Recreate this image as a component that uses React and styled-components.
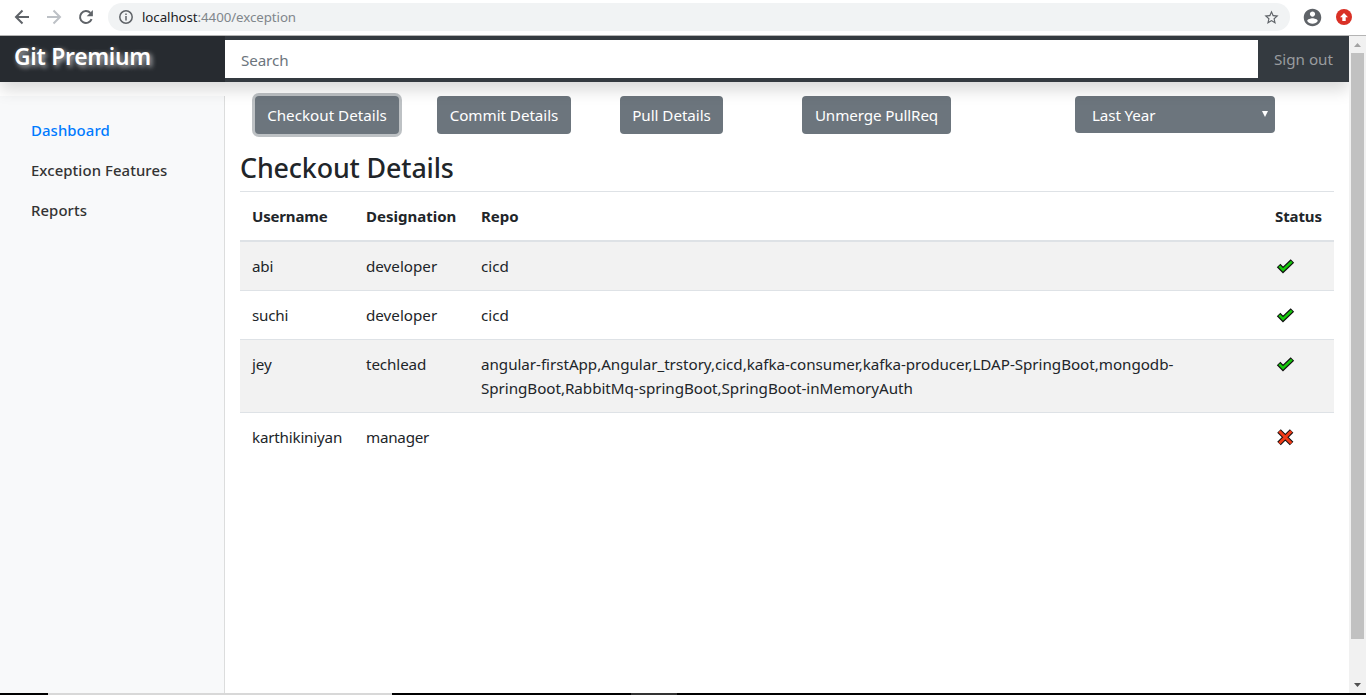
import React from "react";
import styled, { createGlobalStyle } from "styled-components";

const Global = createGlobalStyle`
  *, *::before, *::after { box-sizing: border-box; }
  html, body { margin: 0; padding: 0; overflow: hidden; }
  body { background: #fff; color: #212529; font: 400 15.2px/24px "Noto Sans", "Open Sans", sans-serif; }
`;
const Text = styled.span`
  white-space: nowrap;
  letter-spacing: ${(p) => p.$ls || 0}px;
`;
const Window = styled.div`
  width: 1366px; height: 695px; display: flex; flex-direction: column; overflow: hidden;
`;
const Toolbar = styled.div`
  height: 36px; flex: none; display: flex; align-items: center; padding: 0 2px 1px 11px;
  border-bottom: 1px solid #b4b4b4; background: #fff;
`;
const IconSlot = styled.span`
  width: ${(p) => p.$w}px; display: flex; justify-content: center; align-items: center; flex: none;
  svg { display: block; }
`;
const Address = styled.div`
  flex: 1; height: 28px; border-radius: 14px; background: #f1f3f4; display: flex; align-items: center;
  padding: 0 10px 0 9px; margin: 0 10px 0 11px; color: #80868b; font-size: 13.3px; line-height: 28px;
`;
const Host = styled(Text)`color: #202124;`;
const Path = styled(Text)`flex: 1;`;
const Viewport = styled.div`height: 657px; flex: none; display: flex; overflow: hidden;`;
const Page = styled.div`width: 1349px; flex: none; display: flex; flex-direction: column; overflow: hidden; height: 657px;`;
const Navbar = styled.header`
  height: 46px; flex: none; display: flex; align-items: center; background: #343a40;
  box-shadow: 0 8px 16px rgba(0,0,0,.15); position: relative; z-index: 2;
`;
const Brand = styled.div`
  width: 225px; height: 46px; background: #272b30; padding: 4px 0 0 14px; line-height: 34px;
  color: #fff; font-size: 22.8px; font-weight: 600; text-shadow: 2px 2px 5px rgba(255,255,255,.75);
`;
const Search = styled.div`width: 1033px; height: 38px; background: #fff; color: #6c757d; padding: 0 16px; line-height: 41px;`;
const SignOut = styled.div`flex: 1; padding-left: 16px; color: #999c9f; line-height: 46px; white-space: nowrap;`;
const Body = styled.div`flex: 1; display: flex; padding-top: 14px;`;
const Sidebar = styled.nav`
  width: 225px; flex: none; background: #f8f9fa; border-right: 1px solid #dcdddd; padding: 14px 0 0 31px;
`;
const NavItem = styled.div`
  height: 40px; line-height: 40px; font-size: 14.9px; font-weight: 500; color: ${(p) => (p.$active ? "#007bff" : "#333")};
`;
const Main = styled.main`flex: 1; padding: 0 15px;`;
const Actions = styled.div`display: flex; padding-left: 15px;`;
const Button = styled.div`
  width: ${(p) => p.$w}px; height: 38px; margin-right: ${(p) => p.$gap}px; border-radius: 4px; background: #6c757d;
  color: #fff; display: flex; justify-content: center; line-height: 39px;
  box-shadow: ${(p) => (p.$focus ? "0 0 0 3px rgba(108,117,125,.45)" : "none")};
`;
const Select = styled.div`
  width: 200px; height: 37px; border-radius: 4px; background: #6c757d; color: #fff; line-height: 39px;
  display: flex; justify-content: space-between; padding: 0 7px 0 17px;
  svg { margin-top: 15px; }
`;
const Title = styled.h3`margin: 17px 0 6px; height: 34px; line-height: 34px; font-size: 26.8px; font-weight: 500;`;
const Table = styled.table`
  width: 1094px; table-layout: fixed; border-spacing: 0; border-collapse: separate;
`;
const Th = styled.th`
  width: ${(p) => p.$w}; height: 51px; padding: 0 12px 1px; border-top: 1px solid #dee2e6; border-bottom: 2px solid #dee2e6;
  text-align: left; font-weight: 700; font-size: 15px;
`;
const Row = styled.tr`background: ${(p) => (p.$striped ? "#f2f2f2" : "#fff")};`;
const Td = styled.td`
  padding: 12px 12px; border-top: ${(p) => (p.$first ? 0 : 1)}px solid #dee2e6; vertical-align: top;
  height: ${(p) => (p.$first ? 48 : 49)}px;
`;
const Line = styled(Text)`display: block;`;
const StatusCell = styled(Td)`svg { display: block; margin: 3px 0 0 1px; }`;
const Scrollbar = styled.div`
  width: 17px; background: #f1f1f1; display: flex; flex-direction: column; align-items: center; flex: none;
`;
const ScrollArrow = styled.div`height: 17px; display: flex; align-items: center;`;
const Thumb = styled.div`width: 13px; height: 586px; background: #c1c1c1; margin-bottom: 37px;`;
const Taskbar = styled.div`height: 2px; display: flex; background: #000;`;
const TaskItem = styled.div`width: ${(p) => p.$w}px; background: ${(p) => p.$c};`;

const Tick = () => (
  <svg width="20" height="18" viewBox="0 0 20 18">
    <path d="M2.6 8.6 7 13 16.4 4" fill="none" stroke="#111" strokeWidth="5" />
    <path d="M3.2 9.2 7 13 15.8 4.6" fill="none" stroke="#16c60c" strokeWidth="2.6" />
  </svg>
);
const Cross = () => (
  <svg width="19" height="19" viewBox="0 0 19 19">
    <path d="M3 3 15.6 15.6M15.6 3 3 15.6" stroke="#111" strokeWidth="5" />
    <path d="M3.3 3.3 15.3 15.3M15.3 3.3 3.3 15.3" stroke="#f03a17" strokeWidth="3" />
  </svg>
);

const rows = [
  { user: "abi", role: "developer", repo: ["cicd"], ok: true, ls: -0.15 },
  { user: "suchi", role: "developer", repo: ["cicd"], ok: true, ls: -0.2 },
  {
    user: "jey", role: "techlead", ok: true, ls: -0.1, roleLs: -0.1,
    repo: [
      "angular-firstApp,Angular_trstory,cicd,kafka-consumer,kafka-producer,LDAP-SpringBoot,mongodb-",
      "SpringBoot,RabbitMq-springBoot,SpringBoot-inMemoryAuth",
    ],
  },
  { user: "karthikiniyan", role: "manager", repo: [], ok: false, ls: -0.2, roleLs: -0.25 },
];

export default function App() {
  return (
    <Window>
      <Global />
      <Toolbar>
        <IconSlot $w={22}><svg width="16" height="16" viewBox="0 0 16 16" fill="none" stroke="#5f6368" strokeWidth="2"><path d="M15 8H2M8.5 1.5 2 8l6.5 6.5" /></svg></IconSlot>
        <IconSlot $w={42}><svg width="16" height="16" viewBox="0 0 16 16" fill="none" stroke="#bdc1c6" strokeWidth="2"><path d="M1 8h13M7.5 1.5 14 8l-6.5 6.5" /></svg></IconSlot>
        <IconSlot $w={22}><svg width="16" height="16" viewBox="0 0 16 16"><path d="M13.6 10.2A6 6 0 1 1 12.4 3.9" fill="none" stroke="#5f6368" strokeWidth="2" /><path d="M14.9 1v6.2H8.7z" fill="#5f6368" /></svg></IconSlot>
        <Address>
          <IconSlot $w={18}><svg width="14" height="14" viewBox="0 0 14 14"><circle cx="7" cy="7" r="6.2" fill="none" stroke="#5f6368" strokeWidth="1.5" /><path d="M7 6v4.5M7 3.5V5" stroke="#5f6368" strokeWidth="1.5" /></svg></IconSlot>
          <IconSlot $w={7} />
          <Host $ls={-0.07}>localhost</Host><Path $ls={-0.07}>:4400/exception</Path>
          <svg width="17" height="17" viewBox="0 0 24 24" fill="#5f6368"><path d="M22 9.24l-7.19-.62L12 2 9.19 8.63 2 9.24l5.46 4.73L5.82 21 12 17.27 18.18 21l-1.63-7.03L22 9.24zM12 15.4l-3.76 2.27 1-4.28-3.32-2.88 4.38-.38L12 6.1l1.71 4.04 4.38.38-3.32 2.88 1 4.28L12 15.4z" /></svg>
        </Address>
        <IconSlot $w={24}><svg width="21" height="21" viewBox="0 0 24 24" fill="#5f6368"><path d="M12 2C6.48 2 2 6.48 2 12s4.48 10 10 10 10-4.48 10-10S17.52 2 12 2zm0 3c1.66 0 3 1.34 3 3s-1.34 3-3 3-3-1.34-3-3 1.34-3 3-3zm0 14.2c-2.5 0-4.71-1.28-6-3.22.03-1.99 4-3.08 6-3.08 1.99 0 5.97 1.09 6 3.08-1.29 1.94-3.5 3.22-6 3.22z" /></svg></IconSlot>
        <IconSlot $w={40}><svg width="16" height="16" viewBox="0 0 16 16"><circle cx="8" cy="8" r="8" fill="#d93025" /><path d="M8 4 4 8.3h2.3V12h3.4V8.3H12z" fill="#fff" /></svg></IconSlot>
      </Toolbar>
      <Viewport>
        <Page>
          <Navbar>
            <Brand><Text $ls={-0.25}>Git Premium</Text></Brand>
            <Search><Text $ls={-0.1}>Search</Text></Search>
            <SignOut><Text>Sign out</Text></SignOut>
          </Navbar>
          <Body>
            <Sidebar>
              <NavItem $active><Text $ls={0.08}>Dashboard</Text></NavItem>
              <NavItem><Text $ls={0.08}>Exception Features</Text></NavItem>
              <NavItem><Text $ls={0.08}>Reports</Text></NavItem>
            </Sidebar>
            <Main>
              <Actions>
                <Button $w={144} $gap={38} $focus><Text>Checkout Details</Text></Button>
                <Button $w={134} $gap={49}><Text $ls={-0.05}>Commit Details</Text></Button>
                <Button $w={103} $gap={79}><Text $ls={-0.05}>Pull Details</Text></Button>
                <Button $w={149} $gap={124}><Text $ls={-0.12}>Unmerge PullReq</Text></Button>
                <Select><Text $ls={-0.12}>Last Year</Text><svg width="6" height="6" viewBox="0 0 6 6"><path d="M0 0h6L3 6z" fill="#fff" /></svg></Select>
              </Actions>
              <Title><Text $ls={-0.13}>Checkout Details</Text></Title>
              <Table>
                <thead>
                  <tr>
                    <Th $w="114px"><Text $ls={-0.18}>Username</Text></Th>
                    <Th $w="115px"><Text>Designation</Text></Th>
                    <Th $w="auto"><Text>Repo</Text></Th>
                    <Th $w="71px"><Text $ls={-0.1}>Status</Text></Th>
                  </tr>
                </thead>
                <tbody>
                  {rows.map((r, i) => (
                    <Row key={r.user} $striped={i % 2 === 0}>
                      <Td $first={!i}><Text $ls={r.ls}>{r.user}</Text></Td>
                      <Td $first={!i}><Text $ls={r.roleLs}>{r.role}</Text></Td>
                      <Td $first={!i}>{r.repo.map((t) => <Line key={t} $ls={-0.04}>{t}</Line>)}</Td>
                      <StatusCell $first={!i}>{r.ok ? <Tick /> : <Cross />}</StatusCell>
                    </Row>
                  ))}
                </tbody>
              </Table>
            </Main>
          </Body>
        </Page>
        <Scrollbar>
          <ScrollArrow><svg width="7" height="4" viewBox="0 0 7 4"><path d="M0 4h7L3.5 0z" fill="#a3a3a3" /></svg></ScrollArrow>
          <Thumb />
          <ScrollArrow><svg width="7" height="4" viewBox="0 0 7 4"><path d="M0 0h7L3.5 4z" fill="#505050" /></svg></ScrollArrow>
        </Scrollbar>
      </Viewport>
      <Taskbar>
        <TaskItem $w={48} $c="#000" /><TaskItem $w={344} $c="#d8d8d8" /><TaskItem $w={239} $c="#000" /><TaskItem $w={46} $c="#333" />
      </Taskbar>
    </Window>
  );
}
